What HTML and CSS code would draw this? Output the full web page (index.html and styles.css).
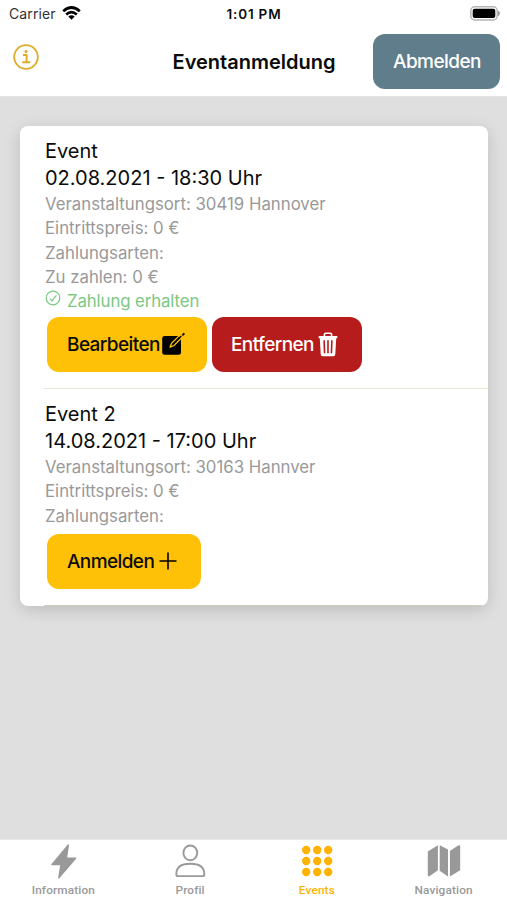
FILE: index.html
```html
<!DOCTYPE html>
<html lang="de">
<head>
<meta charset="utf-8">
<meta name="viewport" content="width=device-width, initial-scale=1">
<title>Eventanmeldung</title>
<link rel="stylesheet" href="styles.css">
</head>
<body>
<div class="app">
  <div class="status">
    <div class="carrier"><span>Carrier</span>
      <svg width="19" height="14" viewBox="0 0 19 14" fill="none" stroke="#000" stroke-width="2.7"><path d="M1.2 5.2Q9.5-2.2 17.8 5.2M4.2 8.5Q9.5 3.8 14.8 8.5"/><path d="M6.3 10.5Q9.5 7.8 12.7 10.5L9.5 13.8Z" fill="#000" stroke="none"/></svg>
    </div>
    <div class="clock">1:01 PM</div>
    <svg class="battery" width="31" height="15" viewBox="0 0 31 15"><rect x=".8" y=".8" width="26.4" height="13.2" rx="4" fill="#fff" stroke="#b5b5b5" stroke-width="1.5"/><rect x="2.7" y="2.8" width="22.6" height="9.2" rx="2" fill="#000"/><path d="M28.6 5.2q1.8 2.2 0 4.4z" fill="#999" stroke="#999"/></svg>
  </div>
  <header class="header">
    <svg class="info" width="26" height="26" viewBox="0 0 26 26" fill="none" stroke="#dfac27" stroke-width="1.8"><circle cx="13" cy="13" r="11.8"/><path d="M10 11h3.6v7.3M9.3 18.3h8" stroke-width="1.9"/><circle cx="13" cy="7.5" r="1.6" fill="#dfac27" stroke="none"/></svg>
    <h1>Eventanmeldung</h1>
    <button class="btn logout">Abmelden</button>
  </header>
  <main class="content">
    <section class="card">
      <article class="event">
        <h2>Event</h2>
        <h2>02.08.2021 - 18:30 Uhr</h2>
        <p>Veranstaltungsort: 30419 Hannover</p>
        <p>Eintrittspreis: 0 €</p>
        <p>Zahlungsarten:</p>
        <p>Zu zahlen: 0 €</p>
        <p class="paid"><svg width="16" height="16" viewBox="0 0 16 16" fill="none" stroke="#7bc883" stroke-width="1.2"><circle cx="8" cy="8" r="6.8"/><path d="M4.800 8.600l2.200 2.200 4.400-5.400"/></svg>Zahlung erhalten</p>
        <div class="actions">
          <button class="btn edit"><span>Bearbeiten</span><svg width="24" height="24" viewBox="0 0 24 24"><rect x="1.200" y="4" width="18.800" height="18.800" rx="2.400"/><path d="M9 15.200L10.600 11.300L18.300 3.600L20.600 5.800L13 13.500Z" fill="none" stroke="#ffc107" stroke-width="1.300" stroke-linejoin="round"/><path d="M11.600 11.800L20 3.400l.9.900-8.400 8.400zM20.700 2.700L22.600.8q1.200.4 1.200 1.400L22 4z"/></svg></button>
          <button class="btn remove"><span>Entfernen</span><svg width="20" height="25" viewBox="0 0 20 25" fill="none" stroke="#fff"><path d="M6.400 4V2.800q0-1.500 1.500-1.500h4.200q1.500 0 1.500 1.500V4" stroke-width="1.600"/><path d="M.7 4h18.600v2.300h-1.100l-.9 16q-.1 1.900-2 1.900H4.700q-1.900 0-2-1.900l-.9-16H.7z" fill="#fff" stroke="none"/><path d="M6.100 8.300l.5 13M10 8.300v13M13.900 8.300l-.5 13" stroke="#b71c1c" stroke-width="1.600"/></svg></button>
        </div>
      </article>
      <article class="event second">
        <h2>Event 2</h2>
        <h2>14.08.2021 - 17:00 Uhr</h2>
        <p>Veranstaltungsort: 30163 Hannver</p>
        <p>Eintrittspreis: 0 €</p>
        <p>Zahlungsarten:</p>
        <div class="actions">
          <button class="btn join"><span>Anmelden</span><svg width="18" height="18" viewBox="0 0 18 18" fill="none" stroke="#000" stroke-width="1.600"><path d="M9 .5v17M.5 9h17"/></svg></button>
        </div>
      </article>
    </section>
  </main>
  <nav class="tabs">
    <a class="tab"><svg width="34" height="36" viewBox="0 0 34 36" fill="#999" stroke="#999" stroke-width="1.400" stroke-linejoin="round"><path d="M22.300 1L5.900 20.600H15L12.800 33.900 29.600 14.300H20.400z"/></svg><span>Information</span></a>
    <a class="tab"><svg width="34" height="36" viewBox="0 0 34 36" fill="none" stroke="#999" stroke-width="1.900"><ellipse cx="17.300" cy="8.900" rx="6.900" ry="7.400"/><path d="M3.300 30.200C3.300 23 8.300 19.800 17.300 19.800S31.300 23 31.300 30.200q0 1.900-1.800 1.900H5.100Q3.300 32.100 3.300 30.200z"/></svg><span>Profil</span></a>
    <a class="tab active"><svg width="34" height="36" viewBox="0 0 34 36" fill="#ffb300"><circle cx="6.200" cy="6" r="4.200"/><circle cx="17.200" cy="6" r="4.200"/><circle cx="28.200" cy="6" r="4.200"/><circle cx="6.200" cy="17" r="4.200"/><circle cx="17.200" cy="17" r="4.200"/><circle cx="28.200" cy="17" r="4.200"/><circle cx="6.200" cy="28" r="4.200"/><circle cx="17.200" cy="28" r="4.200"/><circle cx="28.200" cy="28" r="4.200"/></svg><span>Events</span></a>
    <a class="tab"><svg width="34" height="36" viewBox="0 0 34 36" fill="#999"><path d="M.8 7.400L10.900 1.300V26.200L2.400 32.200Q.8 32.800.8 31.300zM12.700 1.300L21 5.600V32.400L12.700 26.700zM22.900 7L31.500 1.300Q33.200.8 33.200 2.300V26.300L22.900 32.400z"/></svg><span>Navigation</span></a>
  </nav>
</div>
</body>
</html>
```
FILE: styles.css
```css
* { box-sizing: border-box; }
body { margin: 0; font-family: Inter, "Liberation Sans", sans-serif; color: #0b0b0b; background: #dfdfdf; }
h1, h2, p { margin: 0; }
.app { height: 900px; display: flex; flex-direction: column; }
.status { height: 28px; flex: none; background: #fff; display: grid; grid-template-columns: 1fr auto 1fr; align-items: center; padding: 0 6px 0 7px; font-size: 14px; line-height: 20px; }
.carrier { display: flex; align-items: center; gap: 6px; color: #333; padding-left: 2px; letter-spacing: .1px; }
.carrier svg { margin-top: -2px; }
.clock { font-weight: 600; font-size: 13.500px; letter-spacing: .8px; }
.battery { justify-self: end; margin-top: -2px; }
.header { height: 69px; flex: none; background: #fff; border-bottom: 1px solid #e4e4e4; display: grid; grid-template-columns: 127px 1fr 127px; align-items: center; padding: 0 7px 0 13px; }
.info { align-self: start; margin-top: 16px; }
h1 { font-size: 20px; line-height: 28px; font-weight: 600; text-align: center; margin: -1px 5px 0 0; white-space: nowrap; }
.btn { height: 55px; border: 0; border-radius: 12px; padding: 2px 0 0; font: 500 19px/24px Inter, sans-serif; letter-spacing: -.6px; display: flex; align-items: center; justify-content: flex-start; color: #0b0b0b; }
.btn svg { flex: none; margin-top: -2px; }
.logout { width: 127px; background: #607d8b; color: #fff; margin-top: -2px; padding-left: 20px; letter-spacing: -.55px; }
.content { flex: 1; padding: 29px 19px 0 20px; background: #dfdfdf; }
.card { height: 480px; background: #fff; border-radius: 8px; box-shadow: 0 4px 16px rgba(0,0,0,.15); overflow: hidden; padding-left: 24px; }
.event { height: 263px; border-bottom: 1px solid #e9e9d5; padding: 12px 0 0 1px; }
.second { height: 217px; border-color: #c9cebd; }
h2 { font-size: 20px; line-height: 27px; font-weight: 400; white-space: nowrap; }
p { font-size: 16.800px; line-height: 24.300px; color: #999; white-space: nowrap; }
.paid { color: #7bc883; display: flex; gap: 6px; letter-spacing: -.1px; }
.paid svg { margin-top: 1px; }
.actions { display: flex; gap: 5px; margin: 3.500px 0 0 2px; }
.second .actions { margin-top: 6px; }
.edit { width: 160px; background: #ffc107; padding-left: 20px; gap: 1px; }
.remove { width: 150px; background: #b71c1c; color: #fff; padding-left: 19px; gap: 4px; }
.join { width: 154px; background: #ffc107; padding-left: 20px; gap: 5px; }
.tabs { height: 61px; flex: none; display: grid; grid-template-columns: repeat(4, 1fr); background: #fff; border-top: 1px solid #e9e9e9; }
.tab { display: flex; flex-direction: column; align-items: center; padding-top: 4px; font: 500 11.800px/16px Roboto, sans-serif; letter-spacing: .15px; color: #999; }
.tab span { margin-top: 2px; }
.active { color: #ffb300; }
```
